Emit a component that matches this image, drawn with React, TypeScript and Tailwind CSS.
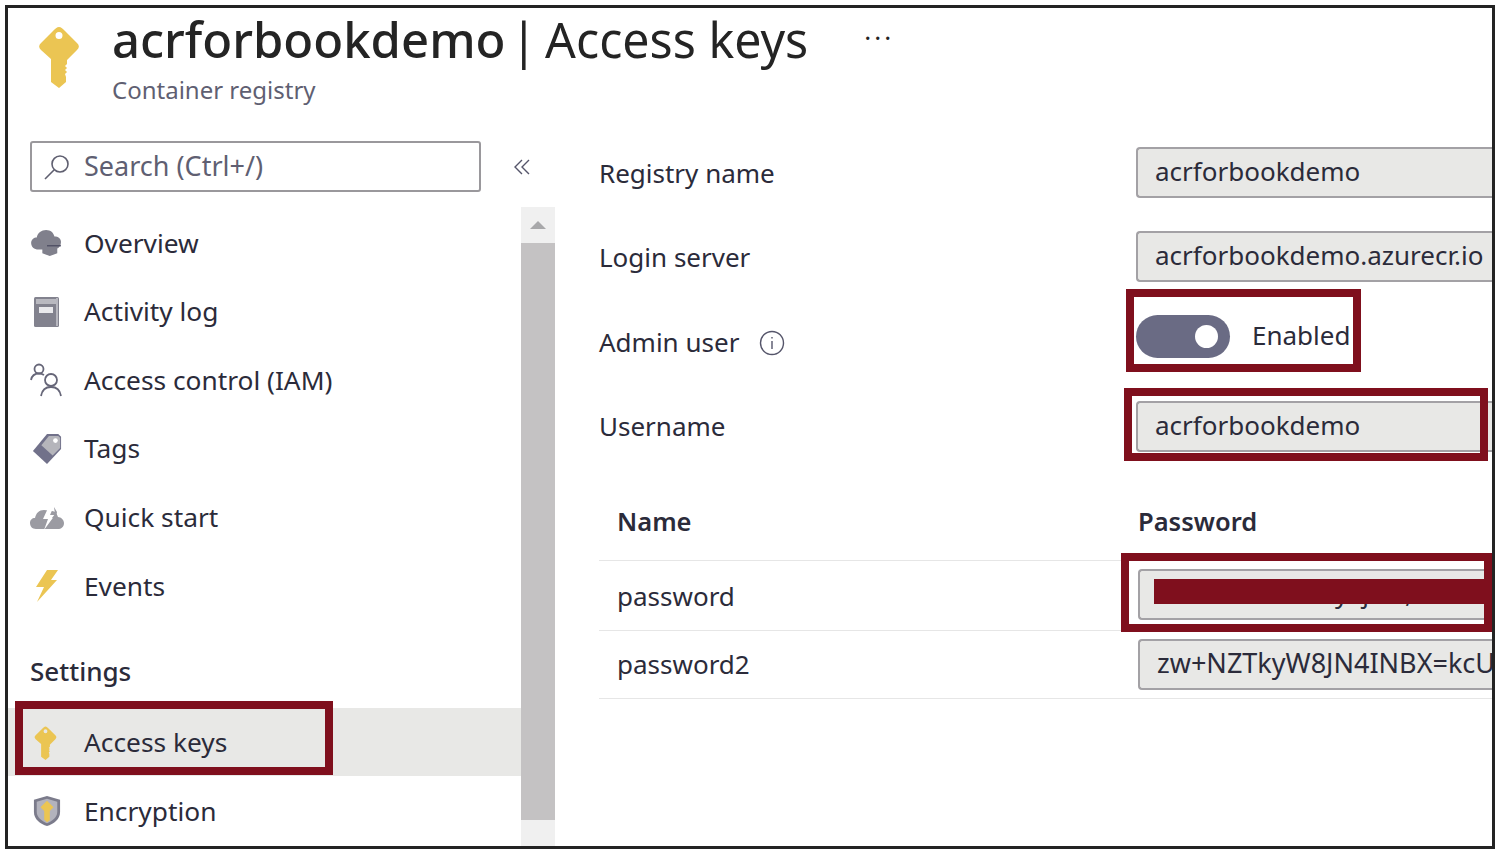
import React from "react";

const KeyIcon = ({ className }: { className: string }) => (
  <svg viewBox="0 0 42 62" className={className}>
    <path
      fill="#ebc553"
      fillRule="evenodd"
      d="M21 1 C23 1 25 3 27 5 L39 17 C41.500 19.500 41.500 21.500 39 24 L29 34 V38 L27 40 L29 42 L27 44 L29 46 L27 48 L28 51 V56 L21 62 L13 56 V33 L3 24 C0.500 21.500 0.500 19.500 3 17 L15 5 C17 3 19 1 21 1 Z M21 6 A3.500 3.500 0 1 0 21 13 A3.500 3.500 0 1 0 21 6 Z"
    />
  </svg>
);

const CloudIcon = () => (
  <svg viewBox="0 0 34 30" className="h-[28px] w-[34px]">
    <path
      fill="#80808c"
      d="M8 22 C3 22 0 19 0 15 C0 11 3 9 6 9 C7 4 11 1 16 1 C21 1 24 4 25 8 C29 8 32 10 32 14 C32 18 30 20 28 21 V26 L20 29 L12 26 V22 Z"
    />
    <path stroke="#44445a" strokeWidth="1.200" d="M17 18 H32" />
  </svg>
);

const BookIcon = () => (
  <svg viewBox="0 0 28 32" className="ml-[3px] h-[32px] w-[28px]">
    <rect x="1" y="1" width="25" height="30" rx="1.500" fill="#82828e" />
    <rect x="3" y="3" width="20" height="5" fill="#b9b9c0" />
    <rect x="6" y="11" width="14" height="6" fill="#e9e9ec" />
    <path stroke="#c9c9cf" strokeWidth="1.500" d="M24 2 V30" />
  </svg>
);

const PeopleIcon = () => (
  <svg viewBox="0 0 34 34" className="h-[34px] w-[34px]" fill="none" stroke="#666678" strokeWidth="1.800">
    <circle cx="9" cy="6" r="4.500" />
    <path d="M1 17 C2 12 5 10.500 9 10.500 C11 10.500 12.500 11 14 12" />
    <circle cx="21" cy="17" r="6" />
    <path d="M11 33 C12 27 16 24 21 24 C26 24 30 27 31 33" />
  </svg>
);

const TagIcon = () => (
  <svg viewBox="0 0 32 34" className="ml-[2px] h-[34px] w-[30px]">
    <path fill="#71718a" d="M16 1 H28 L31 4 V17 L16 33 L1 19 Z" />
    <path fill="#b5b5bb" d="M18 3 H28 L30 5 V16 L22 24 L10 13 Z" />
    <circle cx="25" cy="8" r="2.500" fill="#ffffff" />
  </svg>
);

const QuickStartIcon = () => (
  <svg viewBox="0 0 34 24" className="h-[24px] w-[34px]">
    <path
      fill="#9b9ba2"
      d="M6 23 C2 23 0 20 0 17 C0 14 2 12 5 12 C6 7 9 4 14 4 C17 4 20 5 22 5 C25 5 27 8 28 11 C31 11 34 14 34 17 C34 21 31 23 28 23 Z"
    />
    <path fill="#ffffff" d="M19 0 L24 0 L20 9 L25 9 L14 24 L18 13 L13 13 Z" />
    <path fill="#9b9ba2" d="M22 12 L25 8 L24 1 L27 6 L26 12 Z" />
  </svg>
);

const BoltIcon = () => (
  <svg viewBox="0 0 24 34" className="ml-[5px] h-[34px] w-[24px]">
    <path fill="#ebc553" d="M12 1 H23 L16 11 H22 L2 33 L9 18 H1 Z" />
  </svg>
);

const ShieldIcon = () => (
  <svg viewBox="0 0 30 34" className="ml-[3px] h-[34px] w-[28px]">
    <path fill="#7b7b8b" d="M15 1 L29 5 V18 C29 26 22 31 15 33 C8 31 1 26 1 18 V5 Z" />
    <path fill="#b3b3bd" d="M15 4 L26 7 V18 C26 24 20 28 15 30 C10 28 4 24 4 18 V7 Z" />
    <path fill="#ebc553" d="M15 6 L22 13 L18 17 V27 L15 29 L12 26 V17 L8 13 Z" />
  </svg>
);

const SearchIcon = () => (
  <svg viewBox="0 0 26 26" className="h-[26px] w-[26px]" fill="none" stroke="#5f5f70" strokeWidth="1.600">
    <circle cx="16" cy="10" r="8" />
    <path d="M10 16 L1 25" />
  </svg>
);

const ChevronsLeft = () => (
  <svg viewBox="0 0 18 18" className="h-[18px] w-[18px]" fill="none" stroke="#55556a" strokeWidth="1.400">
    <path d="M9 2 L2 9 L9 16" />
    <path d="M16 2 L9 9 L16 16" />
  </svg>
);

const InfoIcon = () => (
  <svg viewBox="0 0 26 26" className="h-[26px] w-[26px]" fill="none" stroke="#55556a" strokeWidth="1.400">
    <circle cx="13" cy="13" r="11.500" />
    <path d="M13 11 V19" />
    <path d="M13 7 V8.500" />
  </svg>
);

const mainItems = [
  { label: "Overview", icon: <CloudIcon /> },
  { label: "Activity log", icon: <BookIcon /> },
  { label: "Access control (IAM)", icon: <PeopleIcon /> },
  { label: "Tags", icon: <TagIcon /> },
  { label: "Quick start", icon: <QuickStartIcon /> },
  { label: "Events", icon: <BoltIcon /> },
];

const NavRow = ({ label, icon }: { label: string; icon: React.ReactNode }) => (
  <div className="flex h-[68.600px] items-center pl-[22px] text-[26.300px] text-[#2b2b3a]">
    <span className="flex w-[54px] justify-start">{icon}</span>
    <span>{label}</span>
  </div>
);

const ReadOnlyInput = ({ children, className = "" }: { children: React.ReactNode; className?: string }) => (
  <div
    className={`flex h-[51px] items-center overflow-hidden whitespace-nowrap rounded-l-[4px] border-y-2 border-l-2 border-[#a3a1a5] bg-[#e8e8e6] pb-[2px] pl-[17px] text-[26px] text-[#2b2b3a] ${className}`}
  >
    {children}
  </div>
);

const RedBox = ({ className }: { className: string }) => (
  <div className={`pointer-events-none absolute border-[8px] border-[#7f0f1d] ${className}`} />
);

export default function App() {
  return (
    <div className="h-[854px] w-[1500px] overflow-hidden bg-white p-[5px] font-['Noto_Sans',sans-serif]">
      <div className="relative flex h-[844px] w-[1490px] flex-col overflow-hidden border-[3px] border-[#232323]">
        {/* header */}
        <div className="flex h-[133px] shrink-0">
          <div className="pl-[30px] pt-[18px]">
            <KeyIcon className="h-[62px] w-[42px]" />
          </div>
          <div className="pl-[32px]">
            <div className="flex h-[62px] items-center whitespace-nowrap text-[48.300px] leading-none text-[#242424]">
              <span className="text-[49px] font-medium">acrforbookdemo</span>
              <span className="ml-[5px]">|</span>
              <span className="ml-[8px]">Access keys</span>
              <span className="mb-[4px] ml-[56px] text-[26px] tracking-[3px]">···</span>
            </div>
            <div className="pt-[2px] text-[24px] text-[#5f5f72]">Container registry</div>
          </div>
        </div>

        <div className="flex min-h-0 flex-1">
          {/* sidebar */}
          <div className="flex w-[547px] shrink-0 flex-col">
            <div className="flex h-[66px] shrink-0 items-start pl-[22px]">
              <div className="flex h-[51px] w-[451px] items-center gap-[14px] rounded-[3px] border-2 border-[#9a989c] pl-[12px] text-[27px] text-[#5f5f72]">
                <SearchIcon />
                <span>Search (Ctrl+/)</span>
              </div>
              <div className="flex h-[51px] flex-1 items-center pl-[32px]">
                <ChevronsLeft />
              </div>
            </div>
            <div className="flex min-h-0 flex-1">
              <div className="w-[513px] shrink-0 pt-[2px]">
                {mainItems.map((item) => (
                  <NavRow key={item.label} label={item.label} icon={item.icon} />
                ))}
                <div className="flex h-[87px] items-end pb-[17px] pl-[22px] text-[26px] font-medium text-[#2b2b3a]">
                  Settings
                </div>
                <div className="h-[68.600px] bg-[#e8e8e6] pt-[1px]">
                  <NavRow label="Access keys" icon={<KeyIcon className="ml-[4px] h-[34px] w-[23px]" />} />
                </div>
                <div className="pt-[1px]">
                  <NavRow label="Encryption" icon={<ShieldIcon />} />
                </div>
              </div>
              {/* scrollbar */}
              <div className="flex w-[34px] shrink-0 flex-col bg-[#f0f0f0]">
                <div className="flex h-[36px] items-center justify-center">
                  <div className="h-0 w-0 border-x-[8px] border-b-[8px] border-x-transparent border-b-[#a8a8aa]" />
                </div>
                <div className="h-[577px] bg-[#c4c2c3]" />
              </div>
            </div>
          </div>

          {/* main */}
          <div className="min-w-0 flex-1 pl-[44px] pt-[6px] text-[26px] text-[#2b2b3a]">
            <div className="flex h-[84px] items-start">
              <div className="w-[537px] shrink-0 pt-[7px]">Registry name</div>
              <ReadOnlyInput className="flex-1">acrforbookdemo</ReadOnlyInput>
            </div>
            <div className="flex h-[84px] items-start">
              <div className="w-[537px] shrink-0 pt-[7px]">Login server</div>
              <ReadOnlyInput className="flex-1">acrforbookdemo.azurecr.io</ReadOnlyInput>
            </div>
            <div className="flex h-[86px] items-start">
              <div className="flex w-[537px] shrink-0 items-center gap-[20px] pt-[8px]">
                Admin user <InfoIcon />
              </div>
              <div className="flex h-[43px] items-center gap-[22px]">
                <div className="flex h-[43px] w-[94px] items-center justify-end rounded-full bg-[#6a6b84] pr-[12px]">
                  <div className="h-[23px] w-[23px] rounded-full bg-white" />
                </div>
                <span className="pb-[2px]">Enabled</span>
              </div>
            </div>
            <div className="flex h-[84px] items-start">
              <div className="w-[537px] shrink-0 pt-[6px]">Username</div>
              <ReadOnlyInput className="flex-1">acrforbookdemo</ReadOnlyInput>
            </div>

            {/* keys table */}
            <div className="flex h-[76px] items-center border-b border-[#e6e6e6] pb-[2px] text-[25.500px] font-semibold">
              <div className="w-[539px] shrink-0 pl-[18px]">Name</div>
              <div>Password</div>
            </div>
            <div className="flex h-[70px] border-b border-[#e6e6e6] pt-[8px]">
              <div className="w-[539px] shrink-0 pl-[18px] pt-[8px]">password</div>
              <ReadOnlyInput className="flex-1">
                <span className="ml-[178px]">y</span>
                <span className="ml-[14px]">j</span>
                <span className="ml-[36px]">,</span>
              </ReadOnlyInput>
            </div>
            <div className="flex h-[68px] border-b border-[#e6e6e6] pt-[8px]">
              <div className="w-[539px] shrink-0 pl-[18px] pt-[6px]">password2</div>
              <ReadOnlyInput className="flex-1">
                <span className="text-[27px]">zw+NZTkyW8JN4INBX=kcU</span>
              </ReadOnlyInput>
            </div>
          </div>
        </div>

        {/* callouts drawn over the screenshot */}
        <RedBox className="left-[7px] top-[693px] h-[74px] w-[318px]" />
        <RedBox className="left-[1118px] top-[281px] h-[83px] w-[235px]" />
        <RedBox className="left-[1116px] top-[380px] h-[73px] w-[364px]" />
        <RedBox className="left-[1113px] top-[545px] h-[79px] w-[371px]" />
        <div className="absolute left-[1146px] top-[571px] h-[25px] w-[330px] bg-[#7f0f1d]" />
      </div>
    </div>
  );
}
